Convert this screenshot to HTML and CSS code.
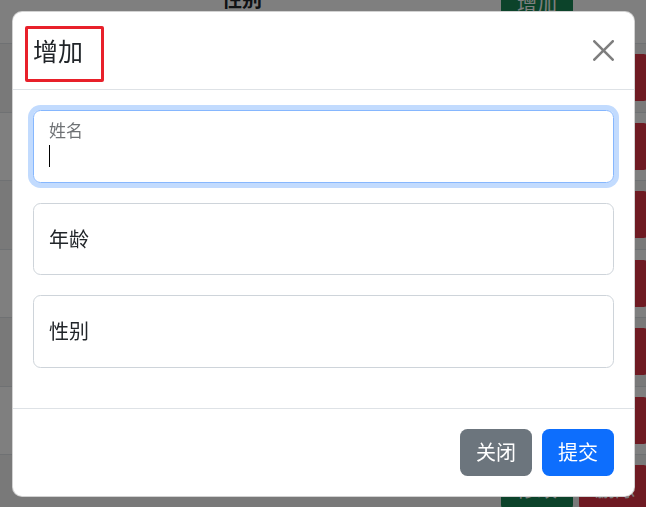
FILE: index.html
```html
<!DOCTYPE html>
<html lang="zh-CN">
<head>
<meta charset="utf-8">
<title>增加</title>
<link rel="stylesheet" href="styles.css">
</head>
<body>
<div class="page">
  <div class="table">
    <div class="tr thead">
      <div class="td"></div>
      <div class="td th">性别</div>
      <div class="td actions"><button class="btn btn-success">增加</button></div>
    </div>
    <div class="tr row striped">
      <div class="td"></div>
      <div class="td"></div>
      <div class="td actions"><button class="btn btn-success">修改</button><button class="btn btn-danger">删除</button></div>
    </div>
    <div class="tr row">
      <div class="td"></div>
      <div class="td"></div>
      <div class="td actions"><button class="btn btn-success">修改</button><button class="btn btn-danger">删除</button></div>
    </div>
    <div class="tr row striped">
      <div class="td"></div>
      <div class="td"></div>
      <div class="td actions"><button class="btn btn-success">修改</button><button class="btn btn-danger">删除</button></div>
    </div>
    <div class="tr row">
      <div class="td"></div>
      <div class="td"></div>
      <div class="td actions"><button class="btn btn-success">修改</button><button class="btn btn-danger">删除</button></div>
    </div>
    <div class="tr row striped">
      <div class="td"></div>
      <div class="td"></div>
      <div class="td actions"><button class="btn btn-success">修改</button><button class="btn btn-danger">删除</button></div>
    </div>
    <div class="tr row">
      <div class="td"></div>
      <div class="td"></div>
      <div class="td actions"><button class="btn btn-success">修改</button><button class="btn btn-danger">删除</button></div>
    </div>
    <div class="tr row striped">
      <div class="td"></div>
      <div class="td"></div>
      <div class="td actions"><button class="btn btn-success">修改</button><button class="btn btn-danger">删除</button></div>
    </div>
  </div>
</div>

<div class="backdrop"></div>

<div class="modal">
  <div class="modal-header">
    <h5 class="modal-title">增加</h5>
    <button class="btn-close" aria-label="Close">
      <svg viewBox="0 0 16 16" width="21" height="21"><path d="M.293.293a1 1 0 0 1 1.414 0L8 6.586 14.293.293a1 1 0 1 1 1.414 1.414L9.414 8l6.293 6.293a1 1 0 0 1-1.414 1.414L8 9.414l-6.293 6.293a1 1 0 0 1-1.414-1.414L6.586 8 .293 1.707a1 1 0 0 1 0-1.414z"/></svg>
    </button>
  </div>
  <div class="modal-body">
    <div class="field focused"><label>姓名</label><span class="caret"></span></div>
    <div class="field"><label>年龄</label></div>
    <div class="field"><label>性别</label></div>
  </div>
  <div class="modal-footer">
    <button class="btn btn-secondary">关闭</button>
    <button class="btn btn-primary">提交</button>
  </div>
</div>
</body>
</html>
```

FILE: styles.css
```css
*, *::before, *::after { box-sizing: border-box; }

html, body {
  margin: 0;
  height: 100%;
  overflow: hidden;
}

body {
  font-family: "Noto Sans CJK SC", "Noto Sans", sans-serif;
  font-size: 20px;
  line-height: 1.5;
  color: #212529;
  background: #fff;
}

/* ---------- background page ---------- */
.page {
  margin-top: -30px;
  width: 720px;
}

.tr {
  display: grid;
  grid-template-columns: 214px 279px 220px;
  border-bottom: 1px solid #dee2e6;
}

.thead { height: 74px; }

.td { padding: 0 8px; line-height: 30px; }

.th {
  font-weight: 700;
  padding-top: 14px;
}

.thead .actions { padding-top: 10px; }

.row {
  height: 68.5px;
  padding-top: 10px;
}

.striped { background: rgba(0, 0, 0, 0.05); }

.actions {
  display: flex;
  gap: 6px;
  align-items: flex-start;
}

.btn {
  font-family: inherit;
  font-size: 20px;
  line-height: 30px;
  height: 47px;
  padding: 7.5px 15px;
  border: 1px solid transparent;
  border-radius: 7.5px;
  color: #fff;
  white-space: nowrap;
}

.btn-success { background: #198754; }
.btn-danger { background: #dc3545; }
.btn-secondary { background: #6c757d; }
.btn-primary { background: #0d6efd; }

/* ---------- overlay ---------- */
.backdrop {
  position: fixed;
  inset: 0;
  background: rgba(0, 0, 0, 0.5);
}

.modal {
  position: fixed;
  left: 12px;
  top: 11px;
  width: 623px;
  background: #fff;
  border: 1px solid rgba(0, 0, 0, 0.175);
  border-radius: 10px;
}

.modal-header {
  display: flex;
  align-items: center;
  justify-content: space-between;
  padding: 20px;
  border-bottom: 1px solid #dee2e6;
}

.modal-title {
  position: relative;
  margin: 0;
  font-size: 25px;
  line-height: 37px;
  font-weight: 400;
}

.modal-title::after {
  content: "";
  position: absolute;
  left: -8px;
  top: -6px;
  width: 79px;
  height: 56px;
  border: 3px solid #e8202a;
  border-radius: 2px;
}

.btn-close {
  display: flex;
  width: 21px;
  height: 21px;
  padding: 0;
  border: 0;
  background: none;
  opacity: 0.5;
}

.btn-close svg { fill: #000; }

.modal-body { padding: 20px; }

.field {
  height: 72.5px;
  margin-bottom: 20px;
  padding: 20px 15px;
  border: 1px solid #ced4da;
  border-radius: 7.5px;
}

.field label {
  display: block;
  font-size: 20px;
  line-height: 30px;
  color: #212529;
}

.field.focused {
  padding: 9px 15px 0;
  border-color: #86b7fe;
  box-shadow: 0 0 0 5px rgba(13, 110, 253, 0.25);
}

.field.focused label {
  font-size: 17px;
  line-height: 20px;
  color: rgba(33, 37, 41, 0.65);
}

.caret {
  display: block;
  width: 1px;
  height: 22px;
  margin-top: 5px;
  background: #000;
}

.modal-footer {
  display: flex;
  justify-content: flex-end;
  padding: 15px;
  border-top: 1px solid #dee2e6;
}

.modal-footer .btn { margin: 5px; }
```
